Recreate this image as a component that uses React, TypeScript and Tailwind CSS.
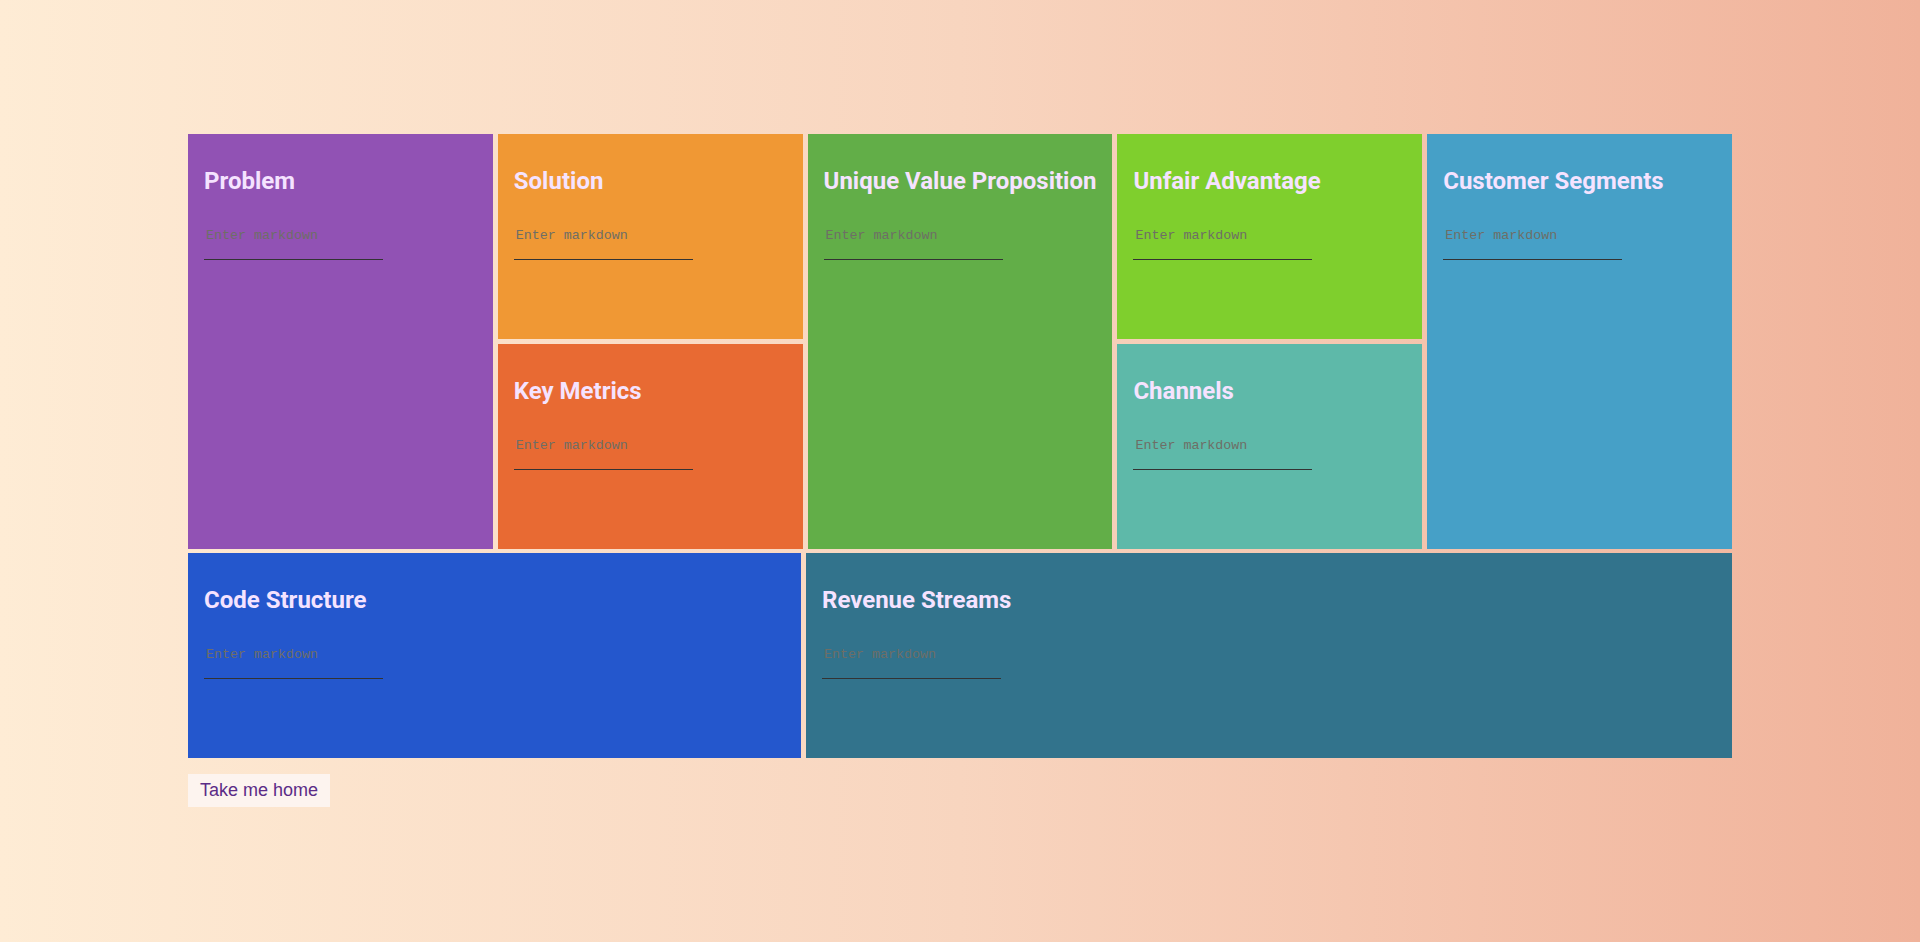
import React from "react";

type Cell = {
  title: string;
  bg: string;
  span?: string;
};

const topCells: Cell[] = [
  { title: "Problem", bg: "bg-[#9152b4]", span: "row-span-2" },
  { title: "Solution", bg: "bg-[#f09834]" },
  { title: "Unique Value Proposition", bg: "bg-[#62ae48]", span: "row-span-2" },
  { title: "Unfair Advantage", bg: "bg-[#7fcf2d]" },
  { title: "Customer Segments", bg: "bg-[#46a0c7]", span: "row-span-2" },
  { title: "Key Metrics", bg: "bg-[#e86a33]", span: "col-start-2 row-start-2" },
  { title: "Channels", bg: "bg-[#5eb9a9]", span: "col-start-4 row-start-2" },
];

const Block = ({ title, bg, span = "" }: Cell) => {
  return (
    <div className={`${bg} ${span} px-4 pt-[33px]`}>
      <h2 className="font-['Roboto',sans-serif] font-bold text-[24px] leading-[28px] text-[#f5e3ff] whitespace-nowrap">
        {title}
      </h2>
      {/* markdown input, underline only */}
      <textarea
        placeholder="Enter markdown"
        className="block mt-[30px] w-[179px] h-[35px] px-[2px] pt-[3px] pb-[1px] resize-none bg-transparent border-0 border-b border-[#333] outline-none font-['Liberation_Mono',monospace] text-[13.33px] leading-[15px] text-[#333] placeholder:text-[#6e6e66]"
      />
    </div>
  );
};

export default function App() {
  return (
    <div className="min-h-[942px] w-full bg-gradient-to-r from-[#feecd5] via-[#f8d5bf] to-[#f0b29a] pt-[134px]">
      <div className="w-[1544px] mx-auto">
        {/* lean canvas, top part */}
        <div className="grid grid-cols-5 grid-rows-[205px_205px] gap-[5px]">
          {topCells.map((c) => (
            <Block key={c.title} {...c} />
          ))}
        </div>

        {/* bottom row */}
        <div className="flex gap-[5px] mt-[4px] h-[205px]">
          <div className="w-[613px]">
            <Block title="Code Structure" bg="bg-[#2457cd] h-full" />
          </div>
          <div className="flex-1">
            <Block title="Revenue Streams" bg="bg-[#32738c] h-full" />
          </div>
        </div>

        <button className="mt-4 h-[33px] px-3 bg-[#fdf4ef] text-[#5b2c87] font-['Liberation_Sans',Arial,sans-serif] text-[18px] leading-[33px]">
          Take me home
        </button>
      </div>
    </div>
  );
}
